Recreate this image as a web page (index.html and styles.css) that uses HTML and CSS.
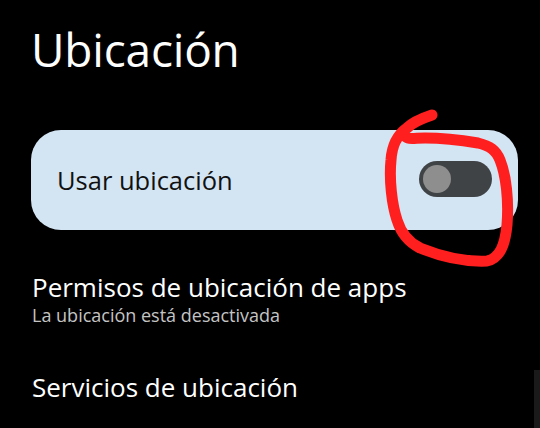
FILE: index.html
```html
<!DOCTYPE html>
<html lang="es">
<head>
<meta charset="utf-8">
<link rel="stylesheet" href="styles.css">
</head>
<body>
<main class="screen">
  <h1 class="title">Ubicación</h1>
  <div class="card">
    <span class="card-label">Usar ubicación</span>
    <span class="switch"><span class="thumb"></span></span>
  </div>
  <div class="item">
    <div class="item-title">Permisos de ubicación de apps</div>
    <div class="item-sub">La ubicación está desactivada</div>
  </div>
  <div class="item item-last">
    <div class="item-title">Servicios de ubicación</div>
  </div>
  <div class="scrollbar"></div>
  <svg class="scribble" width="540" height="428" viewBox="0 0 540 428">
    <path d="M432 115 C420 119 412 123 407 128 C396 136 392 146 391 160 C389 180 392 205 397 220 C401 233 408 242 420 248 C440 256 465 262 487 261 C500 258 505 245 507 225 C509 200 506 175 500 160 C496 150 490 146 478 143 C460 140 440 138 425 138 C414 138 408 140 405 136"
      fill="none" stroke="#ff1f1f" stroke-width="11" stroke-linecap="round" stroke-linejoin="round"/>
  </svg>
</main>
</body>
</html>
```

FILE: styles.css
```css
html, body {
  margin: 0;
  padding: 0;
  background: #000;
}
.screen {
  position: relative;
  width: 540px;
  height: 428px;
  overflow: hidden;
  background: #000;
  font-family: "Open Sans", "Noto Sans", sans-serif;
  color: #fff;
  display: flex;
  flex-direction: column;
}
.title {
  margin: 19px 0 0 31px;
  font-size: 46px;
  font-weight: 400;
  line-height: 60px;
  letter-spacing: -0.2px;
}
.card {
  margin: 51px 22px 0 31px;
  height: 100px;
  border-radius: 30px;
  background: #d3e4f3;
  display: flex;
  align-items: center;
  justify-content: space-between;
  padding: 0 26px 0 26px;
}
.card-label {
  color: #111;
  font-size: 25.5px;
}
.switch {
  width: 73px;
  height: 36px;
  border-radius: 18px;
  background: #404346;
  display: flex;
  align-items: center;
  padding-left: 4px;
  box-sizing: border-box;
  margin-top: -3px;
}
.thumb {
  width: 28px;
  height: 28px;
  border-radius: 50%;
  background: #8e8e8e;
}
.item {
  margin: 41px 0 0 32px;
}
.item-title {
  font-size: 26px;
  line-height: 32px;
}
.item-sub {
  margin-top: 1px;
  font-size: 18px;
  line-height: 22px;
  color: #c4c4c4;
}
.item-last {
  margin-top: 45px;
}
.scrollbar {
  position: absolute;
  right: 0;
  top: 370px;
  width: 6px;
  bottom: 0;
  background: #1a1a1a;
}
.scribble {
  position: absolute;
  left: 0;
  top: 0;
  pointer-events: none;
}
```
